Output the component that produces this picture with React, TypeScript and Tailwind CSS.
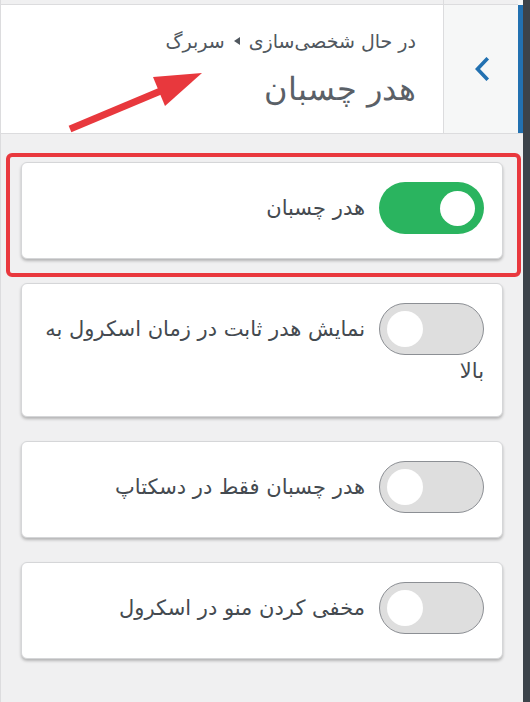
import React from 'react';

const ITEMS = [
  { label: ['هدر چسبان'], on: true, highlight: true },
  { label: ['نمایش هدر ثابت در زمان اسکرول به', 'بالا'], on: false, highlight: false },
  { label: ['هدر چسبان فقط در دسکتاپ'], on: false, highlight: false },
  { label: ['مخفی کردن منو در اسکرول'], on: false, highlight: false },
];

const FONT = "font-['DejaVu_Sans','Noto_Sans',sans-serif]";

function Toggle({ on }: { on: boolean }) {
  if (on) {
    return (
      <div dir="ltr" className="float-right ml-[14px] -mb-2 flex h-[52px] w-[105px] items-center justify-end rounded-full bg-[#2ab45f] pr-[9px]">
        <div className="h-[35px] w-[35px] rounded-full bg-white" />
      </div>
    );
  }
  return (
    <div dir="ltr" className="float-right ml-[14px] -mb-2 flex h-[52px] w-[105px] items-center justify-start rounded-full border border-[#8c8f94] bg-[#dedede] pl-[7px]">
      <div className="h-[36px] w-[36px] rounded-full bg-white" />
    </div>
  );
}

export default function App() {
  return (
    <div dir="rtl" className={`relative flex h-[702px] w-[530px] overflow-hidden bg-[#f0f0f1] ${FONT}`}>
      {/* dark admin strip on the right edge */}
      <div className="w-[7px] shrink-0 bg-[#3c434a]" />

      <div className="flex flex-1 flex-col border-l border-[#dcdcde]">
        {/* header */}
        <div className="flex h-[134px] shrink-0 border-b border-[#dcdcde]">
          <div className="flex w-[5px] flex-col">
            <div className="h-[5px] bg-[#f6f7f7]" />
            <div className="flex-1 bg-[#2271b1]" />
          </div>
          <div className="flex w-[75px] flex-col border-l border-[#dcdcde]">
            <div className="h-[5px] border-b border-[#dcdcde] bg-[#f0f0f1]" />
            <div className="flex flex-1 items-center justify-center bg-[#f6f7f7] pl-[2px]">
              <svg width="16" height="24" viewBox="0 0 16 24" fill="none">
                <path d="M12.5 2.5 L3.5 12 L12.5 21.5" stroke="#2271b1" strokeWidth="3.6" strokeLinecap="square" />
              </svg>
            </div>
          </div>
          <div className="flex flex-1 flex-col">
            <div className="h-[5px] border-b border-[#dcdcde] bg-[#f0f0f1]" />
            <div className="flex flex-1 flex-col bg-white pr-[27px] pt-[22px] text-[#50575e]">
              <div className="flex items-center gap-[9px] text-[19px] leading-[28px]">
                <span>در حال شخصی‌سازی</span>
                <svg width="6" height="8" viewBox="0 0 6 8">
                  <path d="M6 0 L0 4 L6 8 Z" fill="#50575e" />
                </svg>
                <span>سربرگ</span>
              </div>
              <div className="mt-[14px] text-[32px] font-light leading-[40px] text-[#5a6067]">هدر چسبان</div>
            </div>
          </div>
        </div>

        {/* controls */}
        <div className="flex flex-col gap-[24px] px-[20px] pt-[28px]">
          {ITEMS.map((item) => (
            <div key={item.label[0]} className="relative">
              {item.highlight && (
                <div className="pointer-events-none absolute -bottom-[18px] -left-[15px] -right-[18px] -top-[9px] rounded-[6px] border-4 border-[#e9383e]" />
              )}
              <div className="rounded-[6px] border border-[#d5d6d8] bg-white px-[18px] pb-[24px] pt-[19px] shadow-[0_2px_3px_rgba(0,0,0,0.25)]">
                <div className="flow-root min-h-[52px]">
                  <Toggle on={item.on} />
                  <p className="pt-[5px] text-[21px] leading-[42px] text-[#444a50]">
                    {item.label.map((line, i) => (
                      <React.Fragment key={line}>
                        {i > 0 && <br />}
                        {line}
                      </React.Fragment>
                    ))}
                  </p>
                </div>
              </div>
            </div>
          ))}
        </div>
      </div>

      {/* annotation arrow */}
      <svg className="pointer-events-none absolute left-0 top-0" width="530" height="702" viewBox="0 0 530 702">
        <line x1="70" y1="129" x2="163" y2="90" stroke="#e8383d" strokeWidth="7" />
        <polygon points="202,73 153,77 165,106" fill="#e8383d" />
      </svg>
    </div>
  );
}
